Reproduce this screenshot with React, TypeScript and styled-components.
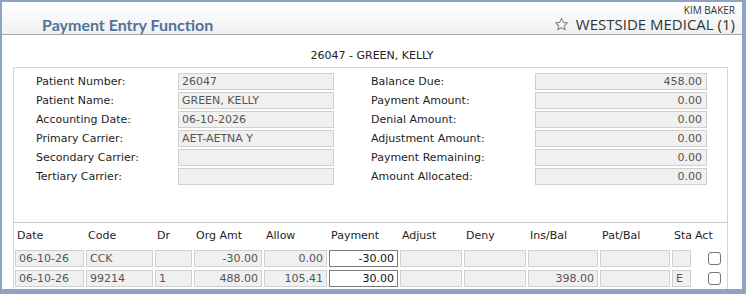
import styled, { createGlobalStyle } from "styled-components";

const GlobalStyle = createGlobalStyle`
  html, body {
    margin: 0;
    padding: 0;
    background: #8fa3c2;
  }
  body {
    font-family: "DejaVu Sans", Verdana, sans-serif;
    font-size: 11px;
    color: #222;
  }
`;

const Frame = styled.div`
  margin: 2px 4px 0 2px;
  height: 287px;
  background: #fff;
  overflow: hidden;
  display: flex;
  flex-direction: column;
`;

const Header = styled.header`
  height: 32px;
  flex: none;
  display: flex;
  align-items: flex-end;
  justify-content: space-between;
  padding: 0 7px 0 40px;
  background: linear-gradient(#ffffff, #eef0f2);
  border-bottom: 1px solid #a6a6a6;
`;

const Title = styled.h1`
  margin: 0;
  font-family: Lato, "Open Sans", sans-serif;
  font-size: 16px;
  font-weight: 700;
  line-height: 18px;
  color: #52729a;
`;

const UserBlock = styled.div`
  display: flex;
  flex-direction: column;
  align-items: flex-end;
  padding-bottom: 2px;
`;

const UserName = styled.div`
  font-family: "Open Sans", sans-serif;
  font-size: 10px;
  line-height: 14px;
  color: #333;
`;

const Practice = styled.div`
  display: flex;
  align-items: center;
  gap: 7px;
  font-family: "Open Sans", sans-serif;
  font-size: 15px;
  line-height: 15px;
  color: #333;
`;

const PatientTitle = styled.div`
  padding: 14px 0 4px;
  line-height: 14px;
  text-align: center;
  color: #222;
`;

const Panel = styled.section`
  margin: 0 14px 0 11px;
  border: 1px solid #d4d4d4;
  padding: 5px 0 10px;
`;

const FormArea = styled.div`
  display: flex;
  gap: 37px;
  padding-left: 22px;
`;

const FieldColumn = styled.div<{ $label: number; $input: number }>`
  display: grid;
  grid-template-columns: ${(p) => p.$label}px ${(p) => p.$input}px;
  row-gap: 2px;
  align-items: center;
`;

const Label = styled.div`
  line-height: 17px;
  color: #1e1e1e;
`;

const ReadOnly = styled.div<{ $num?: boolean }>`
  height: 17px;
  box-sizing: border-box;
  border: 1px solid #cfcfcf;
  background: #f0f0f0;
  color: #555;
  line-height: 15px;
  padding: 0 ${(p) => (p.$num ? "4px" : "3px")};
  text-align: ${(p) => (p.$num ? "right" : "left")};
  white-space: nowrap;
  overflow: hidden;
`;

const Table = styled.div`
  margin-top: 37px;
  border-top: 1px solid #c8c8c8;
  display: flex;
  flex-direction: column;
  gap: 3px;
`;

const cols = "69px 67px 37px 68px 63px 69px 62px 62px 70px 70px 19px 1fr";

const HeadRow = styled.div`
  display: grid;
  grid-template-columns: ${cols};
  column-gap: 2px;
  height: 24px;
  align-items: center;
  padding-left: 1px;
`;

const HeadCell = styled.div`
  padding-left: 2px;
  color: #1e1e1e;
  white-space: nowrap;
`;

const Row = styled.div`
  display: grid;
  grid-template-columns: ${cols};
  column-gap: 2px;
  height: 17px;
  padding-left: 1px;
`;

const Cell = styled.div<{ $num?: boolean; $edit?: boolean }>`
  box-sizing: border-box;
  border: 1px solid ${(p) => (p.$edit ? "#7a7a7a" : "#d0d0d0")};
  background: ${(p) => (p.$edit ? "#fff" : "#f0f0f0")};
  color: ${(p) => (p.$edit ? "#111" : "#555")};
  line-height: 15px;
  padding: 0 3px;
  text-align: ${(p) => (p.$num ? "right" : "left")};
  white-space: nowrap;
  overflow: hidden;
`;

const ActCell = styled.div`
  display: flex;
  align-items: center;
  justify-content: center;
  padding-left: 8px;
`;

const Check = styled.span`
  width: 13px;
  height: 13px;
  box-sizing: border-box;
  border: 1px solid #767676;
  border-radius: 3px;
  background: #fff;
`;

const StarIcon = () => (
  <svg width="15" height="15" viewBox="0 0 24 24" fill="none" stroke="#8a8a8a" strokeWidth="1.8" strokeLinejoin="round">
    <polygon points="12,2.5 14.9,8.6 21.5,9.4 16.6,13.9 17.9,20.5 12,17.2 6.1,20.5 7.4,13.9 2.5,9.4 9.1,8.6" />
  </svg>
);

const leftFields: [string, string][] = [
  ["Patient Number:", "26047"],
  ["Patient Name:", "GREEN, KELLY"],
  ["Accounting Date:", "06-10-2026"],
  ["Primary Carrier:", "AET-AETNA Y"],
  ["Secondary Carrier:", ""],
  ["Tertiary Carrier:", ""],
];

const rightFields: [string, string][] = [
  ["Balance Due:", "458.00"],
  ["Payment Amount:", "0.00"],
  ["Denial Amount:", "0.00"],
  ["Adjustment Amount:", "0.00"],
  ["Payment Remaining:", "0.00"],
  ["Amount Allocated:", "0.00"],
];

const headers = ["Date", "Code", "Dr", "Org Amt", "Allow", "Payment", "Adjust", "Deny", "Ins/Bal", "Pat/Bal", "Sta", "Act"];

type Line = {
  date: string;
  code: string;
  dr: string;
  org: string;
  allow: string;
  payment: string;
  insBal: string;
  sta: string;
};

const lines: Line[] = [
  { date: "06-10-26", code: "CCK", dr: "", org: "-30.00", allow: "0.00", payment: "-30.00", insBal: "", sta: "" },
  { date: "06-10-26", code: "99214", dr: "1", org: "488.00", allow: "105.41", payment: "30.00", insBal: "398.00", sta: "E" },
];

export default function App() {
  return (
    <>
      <GlobalStyle />
      <Frame>
        <Header>
          <Title>Payment Entry Function</Title>
          <UserBlock>
            <UserName>KIM BAKER</UserName>
            <Practice>
              <StarIcon />
              WESTSIDE MEDICAL (1)
            </Practice>
          </UserBlock>
        </Header>

        <PatientTitle>26047 - GREEN, KELLY</PatientTitle>

        <Panel>
          <FormArea>
            <FieldColumn $label={142} $input={156}>
              {leftFields.map(([label, value]) => (
                <>
                  <Label key={label}>{label}</Label>
                  <ReadOnly key={label + "v"}>{value}</ReadOnly>
                </>
              ))}
            </FieldColumn>
            <FieldColumn $label={164} $input={172}>
              {rightFields.map(([label, value]) => (
                <>
                  <Label key={label}>{label}</Label>
                  <ReadOnly key={label + "v"} $num>
                    {value}
                  </ReadOnly>
                </>
              ))}
            </FieldColumn>
          </FormArea>

          <Table>
            <HeadRow>
              {headers.map((h) => (
                <HeadCell key={h}>{h}</HeadCell>
              ))}
            </HeadRow>
            {lines.map((l, i) => (
              <Row key={i}>
                <Cell>{l.date}</Cell>
                <Cell>{l.code}</Cell>
                <Cell>{l.dr}</Cell>
                <Cell $num>{l.org}</Cell>
                <Cell $num>{l.allow}</Cell>
                <Cell $num $edit>
                  {l.payment}
                </Cell>
                <Cell />
                <Cell />
                <Cell $num>{l.insBal}</Cell>
                <Cell />
                <Cell>{l.sta}</Cell>
                <ActCell>
                  <Check />
                </ActCell>
              </Row>
            ))}
          </Table>
        </Panel>
      </Frame>
    </>
  );
}
